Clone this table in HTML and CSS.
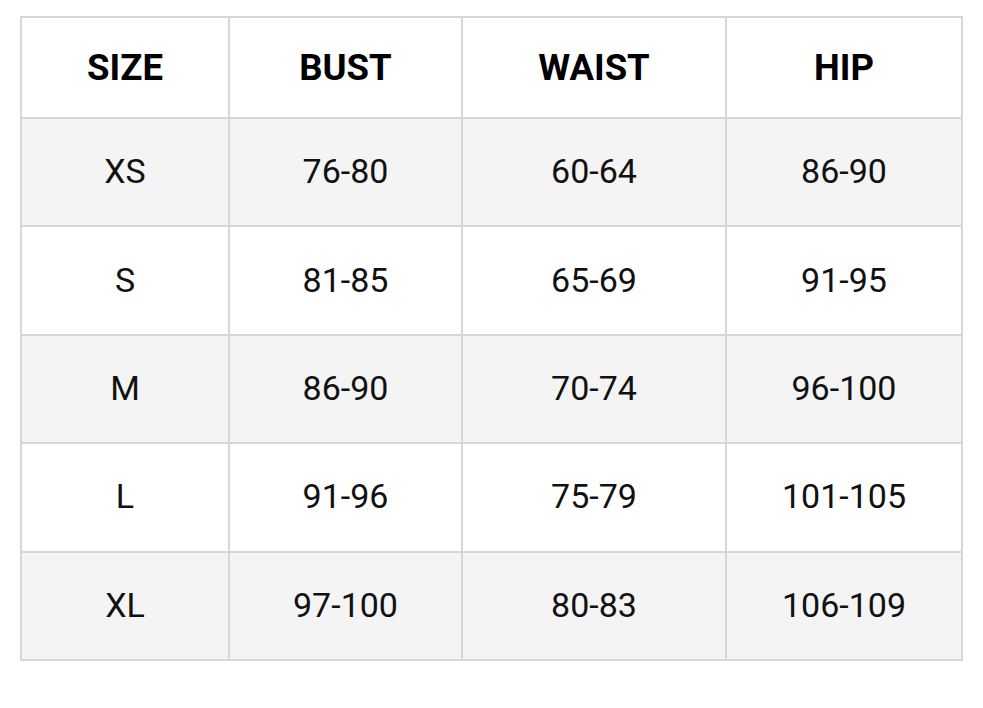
FILE: index.html
```html
<!DOCTYPE html>
<html>
<head>
<meta charset="utf-8">
<link rel="stylesheet" href="styles.css">
</head>
<body>
<table class="chart">
  <colgroup>
    <col class="c1"><col class="c2"><col class="c3"><col class="c4">
  </colgroup>
  <thead>
    <tr class="head"><th>SIZE</th><th>BUST</th><th>WAIST</th><th>HIP</th></tr>
  </thead>
  <tbody>
    <tr class="alt"><td>XS</td><td>76-80</td><td>60-64</td><td>86-90</td></tr>
    <tr><td>S</td><td>81-85</td><td>65-69</td><td>91-95</td></tr>
    <tr class="alt"><td>M</td><td>86-90</td><td>70-74</td><td>96-100</td></tr>
    <tr><td>L</td><td>91-96</td><td>75-79</td><td>101-105</td></tr>
    <tr class="alt"><td>XL</td><td>97-100</td><td>80-83</td><td>106-109</td></tr>
  </tbody>
</table>
</body>
</html>
```
FILE: styles.css
```css
html, body {
  margin: 0;
  background: #ffffff;
}
body {
  padding: 16px 20px;
  font-family: Roboto, "Liberation Sans", sans-serif;
  color: #111111;
}
.chart {
  border-collapse: separate;
  border-spacing: 0;
  table-layout: fixed;
  width: 943px;
  border-top: 2px solid #d7d7d9;
  border-left: 2px solid #d7d7d9;
}
.c1 { width: 208px; }
.c2 { width: 233px; }
.c3 { width: 264px; }
.c4 { width: 236px; }
.chart th, .chart td {
  border-right: 2px solid #d7d7d9;
  border-bottom: 2px solid #d7d7d9;
  text-align: center;
  vertical-align: middle;
  padding: 0 0 2px;
  font-size: 34px;
  line-height: 1;
}
.chart th {
  font-weight: 700;
  font-size: 36.5px;
  padding: 2px 0 0;
  color: #000;
}
.head { height: 101px; }
.chart tbody tr { height: 108.4px; }
.alt td { background: #f4f4f4; }
```
